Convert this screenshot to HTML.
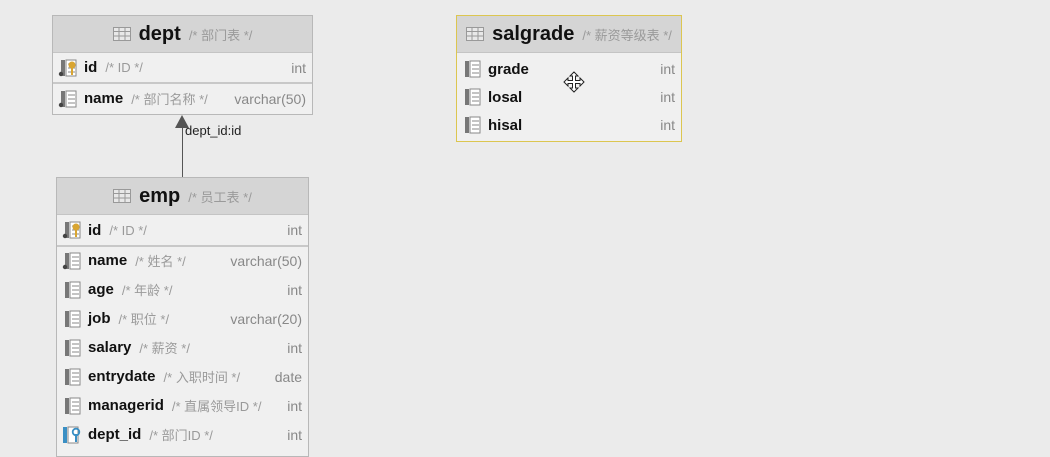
<!DOCTYPE html>
<html><head><meta charset="utf-8"><style>
body{margin:0;width:1050px;height:446px;background:#ebebeb;position:relative;overflow:hidden;font-family:"Liberation Sans","DejaVu Sans","Noto Sans CJK SC",sans-serif}
.t{position:absolute;background:#f0f0f0;border:1px solid #b8b8b8;box-sizing:border-box}
.h{height:36px;background:#d5d5d5;border-bottom:1px solid #c4c4c4;display:flex;align-items:center;justify-content:center;gap:8px}
.h b{font-size:20px;color:#111}
.c{font-size:13px;color:#9a9a9a;font-family:"Liberation Sans","Noto Sans CJK SC",sans-serif}
.r{position:relative;height:29px;display:flex;align-items:center;padding-left:5px}
.r b{font-size:15px;color:#111;margin-left:4px;margin-right:8px}
.ty{position:absolute;right:6px;font-size:14px;color:#888}
.sep{border-bottom:2px solid #c8c8c8}
svg{display:block}
</style></head><body>
<svg width="0" height="0" style="position:absolute">
<defs>
<symbol id="col" viewBox="0 0 18 18"><rect x="1" y="1" width="4" height="16" fill="#777"/><rect x="6" y="1" width="10" height="16" fill="#fff" stroke="#888"/><path d="M8 5h7M8 9h7M8 13h7" stroke="#888"/></symbol>
<symbol id="tab" viewBox="0 0 18 14"><rect x="0.5" y="0.5" width="17" height="13" fill="#e8e8e8" stroke="#999"/><path d="M0 4.5h18M0 9h18M6 0v14M12 0v14" stroke="#999"/></symbol>
</defs></svg>

<!-- dept -->
<div class="t" style="left:52px;top:15px;width:261px;height:100px">
<div class="h"><svg width="18" height="14"><use href="#tab"/></svg><b>dept</b><span class="c">/* 部门表 */</span></div>
<div class="r sep" style="height:29px"><svg width="22" height="18"><use href="#col"/><circle cx="3" cy="15" r="2.2" fill="#444"/><circle cx="14" cy="6" r="3.5" fill="#d9a531"/><rect x="13" y="8" width="2" height="8" fill="#d9a531"/></svg><b>id</b><span class="c">/* ID */</span><span class="ty">int</span></div>
<div class="r"><svg width="22" height="18"><use href="#col"/><circle cx="3" cy="15" r="2.2" fill="#444"/></svg><b>name</b><span class="c">/* 部门名称 */</span><span class="ty">varchar(50)</span></div>
</div>

<!-- connector -->
<div style="position:absolute;left:182px;top:118px;width:1px;height:59px;background:#555"></div>
<div style="position:absolute;left:175px;top:115px;width:0;height:0;border-left:7px solid transparent;border-right:7px solid transparent;border-bottom:13px solid #555"></div>
<div style="position:absolute;left:185px;top:123px;font-size:13px;color:#222">dept_id:id</div>

<!-- emp -->
<div class="t" style="left:56px;top:177px;width:253px;height:280px">
<div class="h"><svg width="18" height="14"><use href="#tab"/></svg><b>emp</b><span class="c">/* 员工表 */</span></div>
<div class="r sep" style="height:30px"><svg width="22" height="18"><use href="#col"/><circle cx="3" cy="15" r="2.2" fill="#444"/><circle cx="14" cy="6" r="3.5" fill="#d9a531"/><rect x="13" y="8" width="2" height="8" fill="#d9a531"/></svg><b>id</b><span class="c">/* ID */</span><span class="ty">int</span></div>
<div class="r" style="margin-top:-1px"><svg width="22" height="18"><use href="#col"/><circle cx="3" cy="15" r="2.2" fill="#444"/></svg><b>name</b><span class="c">/* 姓名 */</span><span class="ty">varchar(50)</span></div>
<div class="r"><svg width="22" height="18"><use href="#col"/></svg><b>age</b><span class="c">/* 年龄 */</span><span class="ty">int</span></div>
<div class="r"><svg width="22" height="18"><use href="#col"/></svg><b>job</b><span class="c">/* 职位 */</span><span class="ty">varchar(20)</span></div>
<div class="r"><svg width="22" height="18"><use href="#col"/></svg><b>salary</b><span class="c">/* 薪资 */</span><span class="ty">int</span></div>
<div class="r"><svg width="22" height="18"><use href="#col"/></svg><b>entrydate</b><span class="c">/* 入职时间 */</span><span class="ty">date</span></div>
<div class="r"><svg width="22" height="18"><use href="#col"/></svg><b>managerid</b><span class="c">/* 直属领导ID */</span><span class="ty">int</span></div>
<div class="r"><svg width="22" height="18"><rect x="1" y="1" width="4" height="16" fill="#3a8fc4"/><rect x="6" y="1" width="10" height="16" fill="#fff" stroke="#888"/><circle cx="14" cy="6" r="3.3" fill="none" stroke="#3a8fc4" stroke-width="1.8"/><rect x="13" y="8" width="2" height="8" fill="#3a8fc4"/></svg><b>dept_id</b><span class="c">/* 部门ID */</span><span class="ty">int</span></div>
</div>

<!-- salgrade -->
<div class="t" style="left:456px;top:15px;width:226px;height:127px;border:1px solid #dcc650">
<div class="h"><svg width="18" height="14"><use href="#tab"/></svg><b>salgrade</b><span class="c">/* 薪资等级表 */</span></div>
<div class="r" style="height:28px;margin-top:2px"><svg width="22" height="18"><use href="#col"/></svg><b>grade</b><span class="ty">int</span></div>
<div class="r" style="height:28px"><svg width="22" height="18"><use href="#col"/></svg><b>losal</b><span class="ty">int</span></div>
<div class="r" style="height:28px"><svg width="22" height="18"><use href="#col"/></svg><b>hisal</b><span class="ty">int</span></div>
</div>
<svg style="position:absolute;left:563px;top:71px" width="22" height="22" viewBox="0 0 22 22"><path d="M11 1l4 4h-2.5v4.5H17V7l4 4-4 4v-2.5h-4.5V17H15l-4 4-4-4h2.5v-4.5H5V15l-4-4 4-4v2.5h4.5V5H7z" fill="#fff" stroke="#222" stroke-width="1"/></svg>
</body></html>
